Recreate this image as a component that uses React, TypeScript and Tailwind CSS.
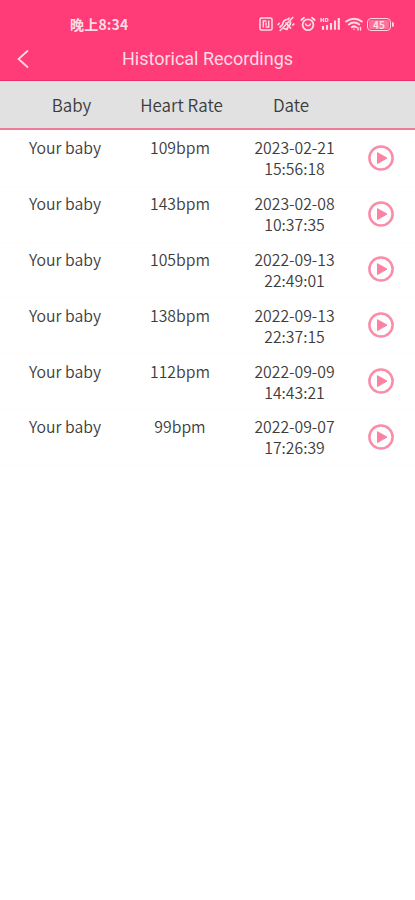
import React from 'react';

interface Recording {
  name: string;
  rate: string;
  date: string;
  time: string;
}

const recordings: Recording[] = [
  { name: 'Your baby', rate: '109bpm', date: '2023-02-21', time: '15:56:18' },
  { name: 'Your baby', rate: '143bpm', date: '2023-02-08', time: '10:37:35' },
  { name: 'Your baby', rate: '105bpm', date: '2022-09-13', time: '22:49:01' },
  { name: 'Your baby', rate: '138bpm', date: '2022-09-13', time: '22:37:15' },
  { name: 'Your baby', rate: '112bpm', date: '2022-09-09', time: '14:43:21' },
  { name: 'Your baby', rate: '99bpm', date: '2022-09-07', time: '17:26:39' },
];

function NfcIcon() {
  return (
    <svg width="14" height="14" viewBox="0 0 14 14" fill="none" stroke="currentColor" strokeWidth="1.5">
      <rect x="1" y="1" width="12" height="12" rx="1.5" />
      <path d="M7.500 4H4.300v6.500M6.500 10h3.200V3.500M7 5.500v3" strokeWidth="1.500" />
    </svg>
  );
}

function MutedBellIcon() {
  return (
    <svg width="18" height="16" viewBox="0 0 18 16" fill="none" stroke="currentColor" strokeWidth="1.700" strokeLinecap="round" strokeLinejoin="round">
      <path d="M3 11l2.500-2.300C6 5.300 7.800 3.200 11 3.400l1-1.200M13.500 6c.2 2.500-1 4-2.800 5.200L10 13.500 7 12.500" />
      <path d="M15.800 1.500L3.200 14.500M9 7l4.500 5M1.200 8.500l1-1M15.800 9l1-1" />
    </svg>
  );
}

function AlarmIcon() {
  return (
    <svg width="16" height="16" viewBox="0 0 16 16" fill="none" stroke="currentColor" strokeWidth="1.800" strokeLinecap="round">
      <circle cx="8" cy="8.700" r="5.400" />
      <path d="M1.300 4L4 1.700M14.700 4L12 1.700" />
      <path d="M5.600 8a2.500 2.500 0 0 0 4.800 0" strokeWidth="1.500" />
    </svg>
  );
}

function SignalIcon() {
  return (
    <svg width="20" height="14" viewBox="0 0 20 14" fill="none" stroke="currentColor">
      <path d="M1 1v4M3.500 1v4M1 3h2.500M5.500 1.500v3h1c2 0 2-3 0-3z" strokeWidth="1.200" />
      <path d="M3 9v3.800M7 8v4.800M11 6v6.800M15 3.500v9.300M18.800 1v11.800" strokeWidth="2.100" />
    </svg>
  );
}

function WifiIcon() {
  return (
    <svg width="18" height="14" viewBox="0 0 18 14" fill="none" stroke="currentColor" strokeWidth="2" strokeLinecap="round">
      <path d="M1.200 4.500c4.500-3.800 11.100-3.800 15.600 0M3.800 7.400c3-2.500 7.400-2.500 10.400 0M6.800 10.200c1.300-1 3.100-1 4.400 0" />
      <path d="M9 12.300v.2M13 10.500v2.500M15.500 10.500v2.500" strokeWidth="1.400" />
    </svg>
  );
}

function Battery() {
  return (
    <div className="flex items-center">
      <div className="flex h-[13px] w-[24px] items-center justify-center rounded-[4px] border-[1.5px] border-[#ffd3df] px-px">
        <span className="w-full rounded-[2px] bg-[#ff7099] text-center text-[10px] leading-[9px] font-bold">45</span>
      </div>
      <div className="ml-px h-[5px] w-[2px] rounded-r-full bg-[#ffd3df]" />
    </div>
  );
}

function PlayButton() {
  return (
    <button className="block" aria-label="Play">
      <svg width="26" height="26" viewBox="0 0 26 26" fill="none">
        <circle cx="13" cy="13" r="11.600" stroke="#fa8ca8" strokeWidth="2.500" />
        <path d="M9.500 7.700v10.800l9.500-5.400z" fill="#fa83a2" stroke="#fa83a2" strokeWidth="1" strokeLinejoin="round" />
      </svg>
    </button>
  );
}

export default function App() {
  return (
    <div className="h-[900px] w-[415px] overflow-hidden bg-white font-['Noto_Sans_CJK_SC',sans-serif] text-[#3c3c3c]">
      <header className="h-[81px] border-b border-[#e82e6d] bg-[#ff3c78] text-[#ffdbe5]">
        <div className="flex h-[38px] items-end justify-between pr-[21px] pl-[70px]">
          <span className="mb-1 text-[14px] leading-[20px] font-bold tracking-[0.2px]">晚上8:34</span>
          <div className="mb-[6px] flex h-4 items-center gap-[4.5px]">
            <NfcIcon />
            <MutedBellIcon />
            <AlarmIcon />
            <SignalIcon />
            <WifiIcon />
            <Battery />
          </div>
        </div>
        <div className="grid h-[42px] grid-cols-[60px_1fr_60px] items-center">
          <button className="pl-[17px]" aria-label="Back">
            <svg width="12" height="20" viewBox="0 0 12 20" fill="none" stroke="currentColor" strokeWidth="1.700">
              <path d="M11 1.500L1.500 10L11 18.500" />
            </svg>
          </button>
          <h1 className="text-center font-[Roboto,sans-serif] text-[18px] leading-6">Historical Recordings</h1>
        </div>
      </header>

      <div className="grid h-[49px] grid-cols-[127px_109px_110px_69px] items-center border-t border-b-2 border-t-[#f5d5df] border-b-[#f07a98] bg-[#e1e1e1] text-center text-[17px] font-[350]">
        <span className="pl-4">Baby</span>
        <span>Heart Rate</span>
        <span>Date</span>
      </div>

      <ul className="pt-px">
        {recordings.map((item) => (
          <li
            key={item.date + item.time}
            className="grid h-[55.8px] grid-cols-[130px_100px_129px_56px] border-b border-[#fcfcfc] pt-[6.400px] text-center text-[15.8px] leading-[21px] font-[350]"
          >
            <span>{item.name}</span>
            <span>{item.rate}</span>
            <div className="flex flex-col">
              <span>{item.date}</span>
              <span>{item.time}</span>
            </div>
            <span className="pt-[7.500px] pl-[9px]">
              <PlayButton />
            </span>
          </li>
        ))}
      </ul>
    </div>
  );
}
